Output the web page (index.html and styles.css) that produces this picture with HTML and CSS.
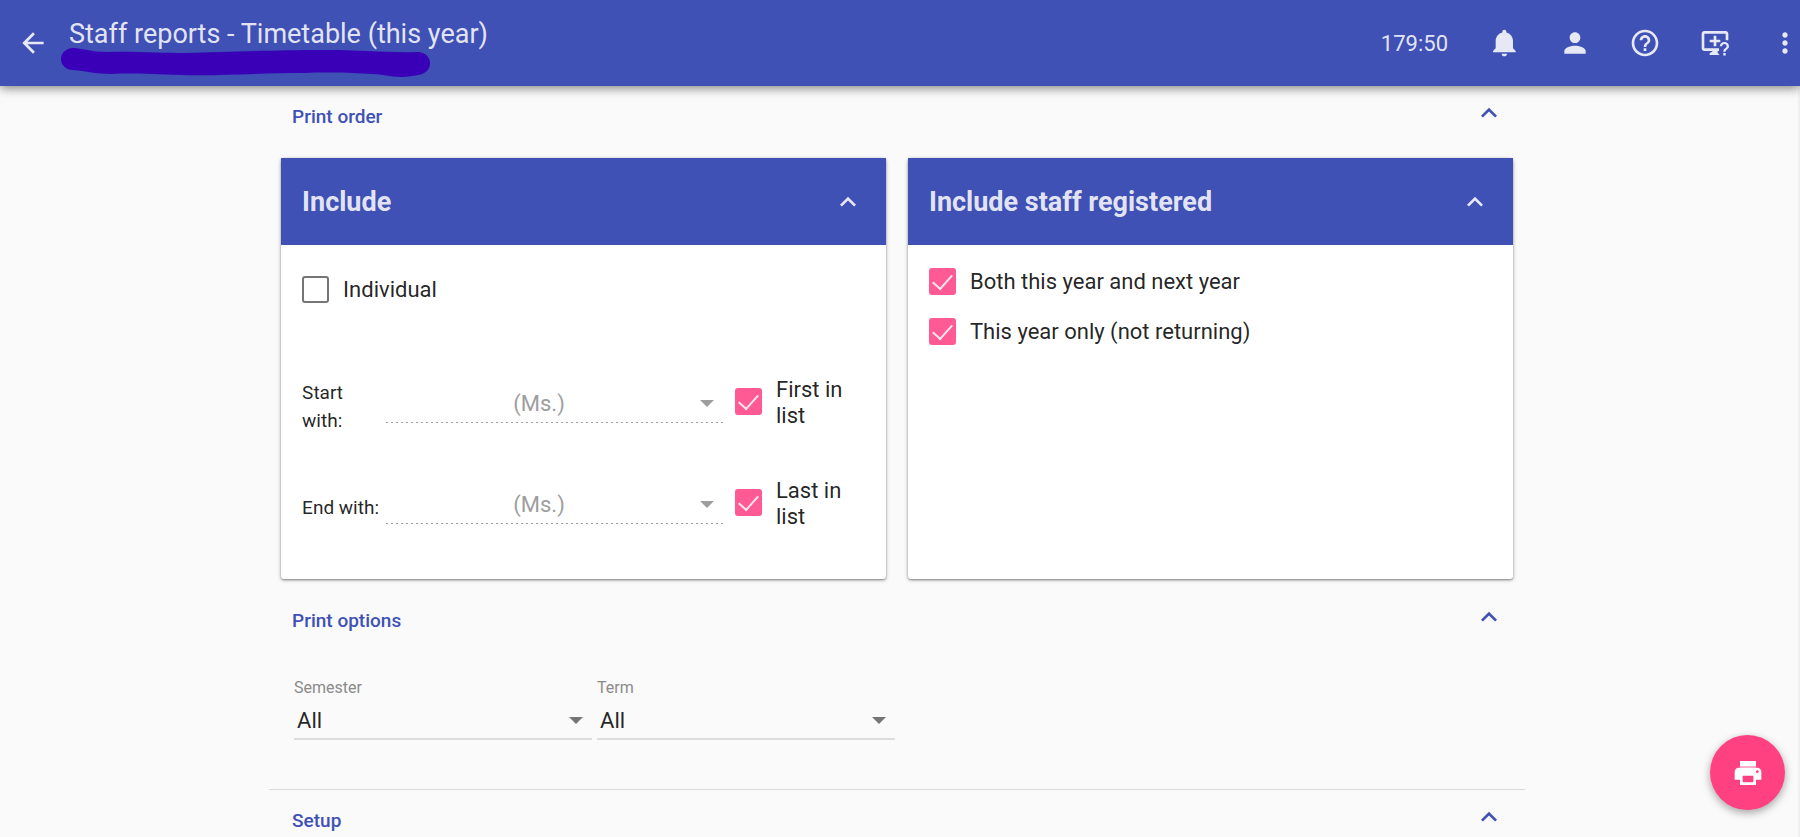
FILE: index.html
```html
<!DOCTYPE html>
<html lang="en">
<head>
<meta charset="utf-8">
<meta name="viewport" content="width=device-width, initial-scale=1">
<title>Staff reports - Timetable (this year)</title>
<link rel="stylesheet" href="styles.css">
</head>
<body>
<svg class="sprite" aria-hidden="true">
  <symbol id="chevron" viewBox="0 0 24 24"><path d="M7.41 15.41 12 10.83l4.59 4.58L18 14l-6-6-6 6z"/></symbol>
</svg>
<header class="topbar">
  <button class="icon-btn" type="button" aria-label="Back">
    <svg class="icon" viewBox="0 0 24 24"><path d="M20 11H7.83l5.59-5.59L12 4l-8 8 8 8 1.41-1.41L7.83 13H20v-2z"/></svg>
  </button>
  <h1 class="topbar-title">Staff reports - Timetable (this year)</h1>
  <svg class="marker" viewBox="0 0 370 30" aria-hidden="true"><path d="M12 0C20 0 30 4 46 4C70 3 100 5 124 5C170 4 210 2 264 2C300 2 325 5 357 4C364 4 369 9 369 15C369 22 364 26 357 27C348 29 338 30 322 27C300 25 270 24 244 25C200 25 160 28 120 27C90 26 70 25 50 26C35 26 25 23 12 22C5 22 0 17 0 11C0 5 5 0 12 0Z"/></svg>
  <div class="topbar-actions">
    <span class="timer">179:50</span>
    <button class="icon-btn" type="button" aria-label="Notifications">
      <svg class="icon" viewBox="0 0 24 24"><path d="M11.5 22c1.1 0 2-.9 2-2h-4c0 1.1.9 2 2 2zm6.500-6v-5.500c0-3.070-2.130-5.640-5-6.320V3.500c0-.830-.670-1.500-1.500-1.500S10 2.670 10 3.500v.680c-2.870.680-5 3.250-5 6.320V16l-2 2v1h17v-1l-2-2z"/></svg>
    </button>
    <button class="icon-btn" type="button" aria-label="Account">
      <svg class="icon" viewBox="0 0 24 24"><path d="M12 12c2.210 0 4-1.790 4-4s-1.790-4-4-4-4 1.790-4 4 1.790 4 4 4zm0 2c-2.670 0-8 1.340-8 4v2h16v-2c0-2.660-5.330-4-8-4z"/></svg>
    </button>
    <button class="icon-btn" type="button" aria-label="Help">
      <svg class="icon" viewBox="0 0 24 24"><path d="M11 18h2v-2h-2v2zm1-16C6.480 2 2 6.480 2 12s4.480 10 10 10 10-4.480 10-10S17.520 2 12 2zm0 18c-4.410 0-8-3.590-8-8s3.590-8 8-8 8 3.590 8 8-3.590 8-8 8zm0-14c-2.210 0-4 1.790-4 4h2c0-1.100.9-2 2-2s2 .9 2 2c0 2-3 1.750-3 5h2c0-2.250 3-2.500 3-5 0-2.210-1.790-4-4-4z"/></svg>
    </button>
    <button class="icon-btn" type="button" aria-label="Remote support">
      <svg class="icon" viewBox="0 0 24 24"><path d="M4 3h16c1.100 0 2 .9 2 2v5h-2V5H4v11h11v2h-1v1.500l1.500 1.500H8v-1.500l2-1V18H4c-1.100 0-2-.9-2-2V5c0-1.100.9-2 2-2z"/><path d="M11 6.500h2v3h3v2h-3v3h-2v-3H8v-2h3z"/><path d="M18.200 19.500h1.800v1.800h-1.800zM19 11.200c-1.900 0-3.400 1.500-3.400 3.300h1.700c0-.9.800-1.700 1.700-1.700s1.700.7 1.700 1.600c0 1.600-2.500 1.500-2.500 4.200h1.800c0-1.800 2.500-2.100 2.500-4.200 0-1.800-1.600-3.200-3.500-3.200z"/></svg>
    </button>
    <button class="icon-btn" type="button" aria-label="More">
      <svg class="icon" viewBox="0 0 24 24"><path d="M12 8c1.100 0 2-.9 2-2s-.9-2-2-2-2 .9-2 2 .9 2 2 2zm0 2c-1.100 0-2 .9-2 2s.9 2 2 2 2-.9 2-2-.9-2-2-2zm0 6c-1.100 0-2 .9-2 2s.9 2 2 2 2-.9 2-2-.9-2-2-2z"/></svg>
    </button>
  </div>
</header>

<main class="page">
  <div class="content">
    <section>
      <h2 class="section-heading"><button class="section-toggle" type="button" aria-expanded="true">Print order<svg class="chevron"><use href="#chevron"/></svg></button></h2>
      <div class="cards">
        <section class="card">
          <h3 class="card-heading"><button class="card-toggle" type="button" aria-expanded="true">Include<svg class="chevron"><use href="#chevron"/></svg></button></h3>
          <div class="card-body card-body-range">
            <div class="check">
              <input class="checkbox" type="checkbox" id="individual">
              <label for="individual">Individual</label>
            </div>
            <div class="ranges">
              <div class="range-row">
                <label class="range-label" for="start">Start with:</label>
                <div class="select-wrap select-disabled">
                  <select class="select" id="start" disabled><option>(Ms.)</option></select>
                </div>
                <div class="check">
                  <input class="checkbox" type="checkbox" id="first" checked>
                  <label for="first">First in list</label>
                </div>
              </div>
              <div class="range-row">
                <label class="range-label" for="end">End with:</label>
                <div class="select-wrap select-disabled">
                  <select class="select" id="end" disabled><option>(Ms.)</option></select>
                </div>
                <div class="check">
                  <input class="checkbox" type="checkbox" id="last" checked>
                  <label for="last">Last in list</label>
                </div>
              </div>
            </div>
          </div>
        </section>
        <section class="card">
          <h3 class="card-heading"><button class="card-toggle" type="button" aria-expanded="true">Include staff registered<svg class="chevron"><use href="#chevron"/></svg></button></h3>
          <div class="card-body card-body-list">
            <div class="check">
              <input class="checkbox" type="checkbox" id="both" checked>
              <label for="both">Both this year and next year</label>
            </div>
            <div class="check">
              <input class="checkbox" type="checkbox" id="this-year" checked>
              <label for="this-year">This year only (not returning)</label>
            </div>
          </div>
        </section>
      </div>
    </section>

    <section class="options">
      <h2 class="section-heading"><button class="section-toggle" type="button" aria-expanded="true">Print options<svg class="chevron"><use href="#chevron"/></svg></button></h2>
      <div class="fields">
        <div class="field">
          <label class="field-label" for="semester">Semester</label>
          <div class="select-wrap"><select class="select" id="semester"><option>All</option></select></div>
        </div>
        <div class="field">
          <label class="field-label" for="term">Term</label>
          <div class="select-wrap"><select class="select" id="term"><option>All</option></select></div>
        </div>
      </div>
    </section>

    <section>
      <h2 class="section-heading"><button class="section-toggle" type="button" aria-expanded="true">Setup<svg class="chevron"><use href="#chevron"/></svg></button></h2>
    </section>
  </div>
</main>

<button class="fab" type="button" aria-label="Print">
  <svg class="icon" viewBox="0 0 24 24"><path fill="#ffc0d6" d="M6 7h12v1H6z"/><path d="M19 8H5c-1.660 0-3 1.340-3 3v6h4v4h12v-4h4v-6c0-1.660-1.340-3-3-3zm-3 11H8v-5h8v5zm3-7c-.550 0-1-.450-1-1s.450-1 1-1 1 .450 1 1-.450 1-1 1zm-1-9H6v4h12V3z"/></svg>
</button>
</body>
</html>
```

FILE: styles.css
```css
:root {
  --primary: #3f51b5;
  --accent: #ff4081;
  --on-primary: rgba(255, 255, 255, 0.87);
  --ink: rgba(0, 0, 0, 0.87);
}

* {
  box-sizing: border-box;
}

body {
  margin: 0;
  height: 100vh;
  display: flex;
  flex-direction: column;
  background: #fafafa;
  color: var(--ink);
  font-family: Roboto, sans-serif;
  font-size: 22px;
  line-height: 26px;
}

h1, h2, h3 {
  margin: 0;
}

button {
  padding: 0;
  border: 0;
  background: none;
  color: inherit;
  font: inherit;
  cursor: pointer;
}

.sprite {
  display: none;
}

.icon {
  display: block;
  width: 32px;
  height: 32px;
  fill: currentColor;
}

.chevron {
  width: 32px;
  height: 32px;
  fill: currentColor;
}

/* Top bar */
.topbar {
  position: relative;
  z-index: 1;
  flex: none;
  display: flex;
  align-items: center;
  height: 86px;
  padding: 0 0 0 17px;
  background: var(--primary);
  color: var(--on-primary);
  box-shadow: 0 2px 10px rgba(0, 0, 0, 0.5);
}

.topbar-title {
  align-self: flex-start;
  padding: 18px 0 0 20px;
  font-size: 27px;
  line-height: 32px;
  font-weight: 400;
}

.marker {
  position: absolute;
  left: 61px;
  top: 48px;
  width: 370px;
  height: 30px;
  fill: #3900b7;
}

.topbar-actions {
  display: flex;
  align-items: center;
  gap: 38px;
  margin-left: auto;
  margin-right: -1px;
}

.timer {
  padding: 2px 3px 0 0;
}

/* Page */
.page {
  flex: 1;
  min-height: 0;
  overflow-y: auto;
  scrollbar-width: none;
  padding-right: 4px;
  border-right: 2px solid #f0f0f0;
}

.content {
  width: 70%;
  margin: 0 auto;
}

.section-heading {
  padding: 0 20px 0 23px;
  color: var(--primary);
  font-size: 19px;
  font-weight: 500;
}

.section-toggle,
.card-toggle {
  display: flex;
  align-items: center;
  justify-content: space-between;
  width: 100%;
  text-align: left;
}

.section-toggle {
  height: 60px;
  padding-top: 2px;
}

.section-toggle .chevron {
  margin-bottom: 8px;
}

.cards {
  display: grid;
  grid-template-columns: 1fr 1fr;
  gap: 22px;
  padding: 12px 12px 11px;
}

.card {
  background: #fff;
  border-radius: 3px;
  box-shadow: 0 1px 4px rgba(0, 0, 0, 0.25), 0 1px 2px rgba(0, 0, 0, 0.35);
}

.card-heading {
  padding: 0 22px 0 21px;
  background: var(--primary);
  color: var(--on-primary);
  font-size: 27px;
  font-weight: 700;
}

.card-toggle {
  height: 87px;
}

.card-body {
  padding: 0 22px 0 21px;
}

.card-body-range {
  padding-top: 30px;
  padding-bottom: 43px;
}

.card-body-list {
  display: grid;
  gap: 22px;
  padding-top: 22px;
}

/* Check boxes */
.check {
  display: flex;
  align-items: center;
  gap: 14px;
}

.check label {
  padding-top: 2px;
}

.checkbox {
  appearance: none;
  flex: none;
  display: flex;
  justify-content: center;
  width: 27px;
  height: 27px;
  margin: 0;
  border: 2px solid #757575;
  border-radius: 3px;
}

.checkbox:checked {
  border-color: #ff5a93;
  background: #ff5a93;
}

.checkbox:checked::after {
  content: "";
  width: 9px;
  height: 17px;
  border: solid #ffe6ef;
  border-width: 0 2px 2px 0;
  transform: rotate(42deg);
}

.ranges {
  display: grid;
  gap: 34px;
  padding-top: 65px;
}

.range-row {
  display: grid;
  grid-template-columns: 84px 1fr 129px;
  align-items: center;
  min-height: 67px;
}

.range-label {
  padding-top: 11px;
  font-size: 19px;
  line-height: 28px;
}

/* Drop-downs */
.select-wrap {
  position: relative;
}

.select-wrap::after {
  content: "";
  position: absolute;
  right: 9px;
  top: 19px;
  border: solid transparent;
  border-width: 7px 7px 0;
  border-top-color: #757575;
  pointer-events: none;
}

.select {
  appearance: none;
  display: block;
  width: 100%;
  height: 42px;
  padding: 5px 34px 0 3px;
  border: 0;
  border-bottom: 2px solid #dcdcdc;
  border-radius: 0;
  background: none;
  color: var(--ink);
  font: inherit;
}

.select-disabled {
  margin-right: 12px;
}

.select-disabled::after {
  border-top-color: #9e9e9e;
}

.select-disabled .select {
  border-bottom: 0;
  background: repeating-linear-gradient(90deg, #9e9e9e 0 2px, transparent 2px 5px) bottom / 100% 1px no-repeat;
  color: #9e9e9e;
  opacity: 1;
  text-align-last: center;
}

/* Print options */
.options {
  border-bottom: 1px solid #dadada;
}

.fields {
  display: flex;
  gap: 5px;
  padding: 28px 25px 49px;
}

.field {
  width: 298px;
}

.field-label {
  display: block;
  font-size: 16px;
  line-height: 20px;
  color: #8a8a8a;
}

/* Print button */
.fab {
  position: fixed;
  z-index: 2;
  right: 15px;
  bottom: 27px;
  display: grid;
  place-items: center;
  width: 75px;
  height: 75px;
  border-radius: 50%;
  background: var(--accent);
  color: #fff;
  box-shadow: 0 3px 8px rgba(0, 0, 0, 0.35);
}
```
